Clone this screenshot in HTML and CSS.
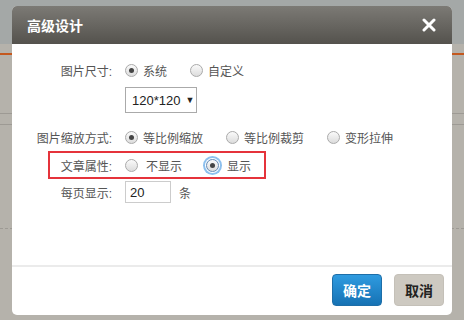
FILE: index.html
```html
<!DOCTYPE html>
<html lang="zh-CN">
<head>
	<meta charset="UTF-8">
	<meta name="viewport" content="width=device-width, initial-scale=1.0">
	<title>高级设计</title>
	<link rel="stylesheet" href="styles.css">
</head>
<body>
	<div class="backdrop">
		<div class="top-band"></div>
		<div class="orange-line"></div>
		<div class="side-lines">
			<div class="line"></div>
			<div class="line"></div>
		</div>
		<div class="dash-line"></div>
	</div>

	<div class="dialog">
		<div class="dialog-head">
			<span class="dialog-title">高级设计</span>
			<svg class="dialog-close" width="14" height="14" viewBox="0 0 14 14">
				<path d="M2 2 L12 12 M12 2 L2 12" stroke="#fff" stroke-width="3" stroke-linecap="round"/>
			</svg>
		</div>

		<div class="dialog-body">
			<div class="form-row">
				<div class="label">图片尺寸:</div>
				<div class="options">
					<label class="opt"><span class="radio checked"></span>系统</label>
					<label class="opt"><span class="radio"></span>自定义</label>
				</div>
			</div>

			<div class="form-row select-row">
				<div class="label"></div>
				<div class="select">120*120 <span class="arrow">▼</span></div>
			</div>

			<div class="form-row scale-row">
				<div class="label">图片缩放方式:</div>
				<div class="options">
					<label class="opt"><span class="radio checked"></span>等比例缩放</label>
					<label class="opt"><span class="radio"></span>等比例裁剪</label>
					<label class="opt"><span class="radio"></span>变形拉伸</label>
				</div>
			</div>

			<div class="form-row marked-row">
				<div class="marked">
					<div class="label">文章属性:</div>
					<div class="options">
						<label class="opt wide"><span class="radio"></span>不显示</label>
						<label class="opt wide"><span class="radio checked focused"></span>显示</label>
					</div>
				</div>
			</div>

			<div class="form-row count-row">
				<div class="label">每页显示:</div>
				<div class="count">
					<div class="num-input">20</div>
					<span class="unit">条</span>
				</div>
			</div>
		</div>

		<div class="dialog-foot">
			<button class="btn btn-ok">确定</button>
			<button class="btn btn-cancel">取消</button>
		</div>
	</div>
</body>
</html>
```

FILE: styles.css
```css
body {
	margin: 0;
	padding: 0;
	width: 464px;
	height: 320px;
	overflow: hidden;
	position: relative;
	background-color: #b5b2ab;
	font-family: "Liberation Sans", "Noto Sans CJK SC", sans-serif;
	font-size: 12px;
	color: #555;
}

/* dimmed page behind the dialog */
.top-band {
	height: 44px;
	background-color: #a4a8a7;
}

.orange-line {
	margin-top: 9px;
	height: 2px;
	background-color: #c4581e;
}

.side-lines {
	margin-top: 58px;
}

.side-lines .line {
	height: 1px;
	margin-bottom: 10px;
	background-color: #9d9a94;
}

.dash-line {
	margin-top: 103px;
	border-top: 1px dashed #9d9a94;
}

.dialog {
	position: absolute;
	left: 12px;
	top: 6px;
	width: 440px;
	background-color: #fff;
	border-radius: 5px;
	overflow: hidden;
}

.dialog-head {
	height: 38px;
	display: flex;
	align-items: center;
	justify-content: space-between;
	padding: 0 16px 0 15px;
	background: linear-gradient(#7c7a75, #54524d);
	color: #fff;
}

.dialog-title {
	font-size: 14px;
	font-weight: bold;
}

.dialog-body {
	height: 207px;
	padding-top: 14px;
	border-bottom: 2px solid #ebebeb;
}

.form-row {
	display: flex;
	align-items: center;
	height: 24px;
	white-space: nowrap;
}

.label {
	flex-shrink: 0;
	width: 100px;
	margin-right: 13px;
	text-align: right;
	color: #555;
}

.options {
	display: flex;
	align-items: center;
}

.opt {
	display: flex;
	align-items: center;
	margin-right: 23px;
	color: #555;
}

.opt:last-child {
	margin-right: 0;
}

.radio {
	flex-shrink: 0;
	width: 11px;
	height: 11px;
	margin-right: 5px;
	border: 1px solid #aaa;
	border-radius: 50%;
	background: linear-gradient(#fafafa, #dcdcdc);
	position: relative;
}

.radio.checked::after {
	content: "";
	position: absolute;
	left: 3px;
	top: 3px;
	width: 5px;
	height: 5px;
	border-radius: 50%;
	background-color: #444;
}

.radio.focused {
	box-shadow: 0 0 0 1px #fff, 0 0 0 3px #8dc0ee;
	border-color: #6a8db5;
}

.select-row {
	margin-top: 5px;
	height: 26px;
}

.select {
	width: 64px;
	height: 24px;
	padding-left: 6px;
	border: 1px solid #aaa;
	display: flex;
	align-items: center;
	font-size: 13px;
	color: #222;
}

.select .arrow {
	font-size: 9px;
	margin-left: 5px;
}

.scale-row {
	margin-top: 12px;
}

.marked-row {
	margin-top: 2px;
	height: 28px;
}

.marked {
	display: flex;
	align-items: center;
	height: 24px;
	width: 214px;
	margin-left: 36px;
	border: 2px solid #e5333b;
}

.marked .label {
	width: 62px;
}

.opt.wide .radio {
	margin-right: 8px;
}

.opt.wide {
	margin-right: 24px;
}

.opt.wide:last-child {
	margin-right: 0;
}

.count-row {
	margin-top: 2px;
	height: 22px;
}

.count {
	display: flex;
	align-items: center;
}

.num-input {
	width: 40px;
	height: 20px;
	padding-left: 4px;
	border: 1px solid #ccc;
	display: flex;
	align-items: center;
	font-size: 13px;
	color: #222;
}

.unit {
	margin-left: 8px;
}

.dialog-foot {
	display: flex;
	justify-content: flex-end;
	gap: 12px;
	padding: 7px 8px 9px 0;
}

.btn {
	width: 50px;
	height: 32px;
	border-radius: 4px;
	font-family: "Liberation Sans", "Noto Sans CJK SC", sans-serif;
	font-size: 14px;
	font-weight: bold;
	cursor: pointer;
}

.btn-ok {
	color: #fff;
	border: 1px solid #1d6ea8;
	background: linear-gradient(#2f9be0, #1672b4);
}

.btn-cancel {
	color: #222;
	border: 1px solid #c4c0b8;
	background-color: #cdc9c1;
}
```
